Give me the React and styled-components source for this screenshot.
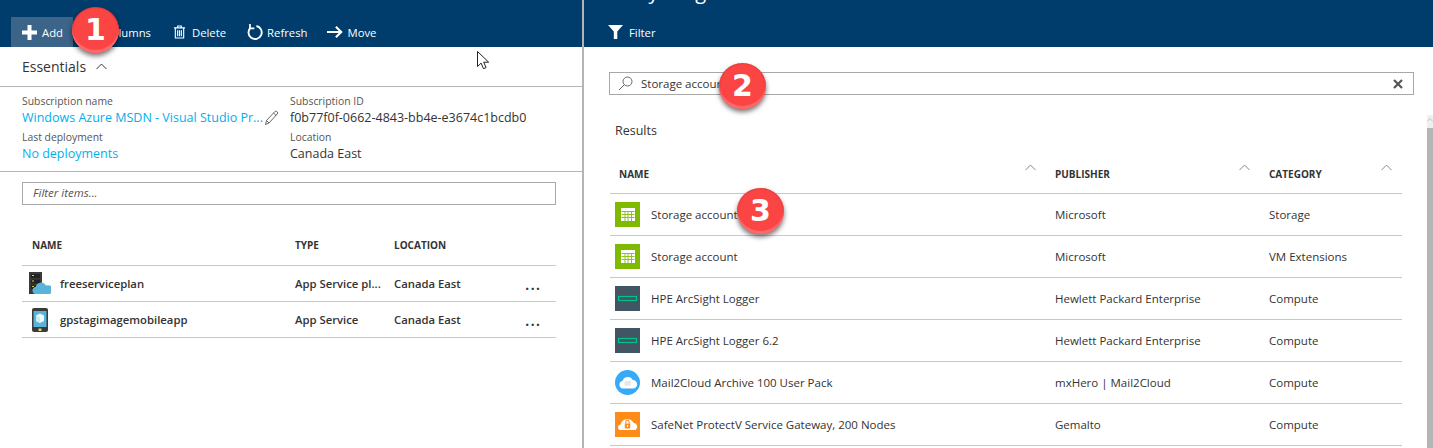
import React from "react"
import styled, { createGlobalStyle } from "styled-components"

const Global = createGlobalStyle`
  html, body { margin: 0; padding: 0; background: #fff; overflow: hidden; }
  body { font-family: "Open Sans", "Noto Sans", "Liberation Sans", sans-serif; color: #333; }
`

const AddIcon = () => (
  <svg width="17" height="17" viewBox="0 0 17 17"><path d="M6.5 1h4v5.5H16v4h-5.5V16h-4v-5.5H1v-4h5.5z" fill="#fff" /></svg>
)
const TrashIcon = () => (
  <svg width="13" height="16" viewBox="0 0 14 16" fill="none" stroke="#fff" strokeWidth="1.2">
    <path d="M1 3.5h12M5 3.5V1.5h4v2M2.5 3.5v11h9v-11" />
    <path d="M5 6v6.5M7 6v6.5M9 6v6.5" />
  </svg>
)
const RefreshIcon = () => (
  <svg width="17" height="18" viewBox="0 0 18 18" fill="none" stroke="#fff" strokeWidth="2">
    <path d="M5 4.2A7 7 0 1 0 11 2.6" />
    <path d="M4.2 0.6v4.6h4.6" strokeWidth="1.8" />
  </svg>
)
const ArrowIcon = () => (
  <svg width="16" height="14" viewBox="0 0 18 14" fill="none" stroke="#fff" strokeWidth="2.4">
    <path d="M0 7h15.5M10 1l6 6-6 6" />
  </svg>
)
const FilterIcon = () => (
  <svg width="15" height="14" viewBox="0 0 15 14"><path d="M0 0h15L9.3 6.5V14H5.8V6.5z" fill="#fff" /></svg>
)
const Chevron = ({ stroke = "#444", size = 11 }) => (
  <svg width={size} height={size * 0.6} viewBox="0 0 11 6.5" fill="none" stroke={stroke} strokeWidth="1"><path d="M.5 6 5.5 1l5 5" /></svg>
)
const PencilIcon = () => (
  <svg width="15" height="16" viewBox="0 0 15 16" fill="none" stroke="#666" strokeWidth="1">
    <path d="M1.5 14.5 2.5 10.5 10.8 1.6a1.4 1.4 0 0 1 2 0l.4.4a1.4 1.4 0 0 1 0 2L5 13z" />
    <path d="M2.5 10.5 5 13M9.5 3l2.7 2.6" />
  </svg>
)
const SearchIcon = () => (
  <svg width="15" height="15" viewBox="0 0 15 15" fill="none" stroke="#666" strokeWidth="1">
    <circle cx="9.5" cy="5.5" r="4.5" />
    <path d="M6.2 8.8 1 14" />
  </svg>
)
const CloseIcon = () => (
  <svg width="10" height="10" viewBox="0 0 10 10" stroke="#555" strokeWidth="2.2"><path d="M1 1l8 8M9 1l-8 8" /></svg>
)
const PlanIcon = () => (
  <svg width="22" height="24" viewBox="0 0 22 24">
    <rect x="0" y="0" width="13" height="22" fill="#3a3a3a" />
    <rect x="2" y="2" width="9" height="4" fill="#222" /><rect x="2" y="7.5" width="9" height="4" fill="#222" /><rect x="2" y="13" width="9" height="4" fill="#222" />
    <path d="M3 3.5h2M3 9h2M3 14.5h2" stroke="#c6dc3c" strokeWidth="1" />
    <path d="M6 22a3.6 3.6 0 0 1 .6-7A5.6 5.6 0 0 1 17 13.6a4.2 4.2 0 0 1 4 8.4z" fill="#59b4d9" />
  </svg>
)
const PhoneIcon = () => (
  <svg width="22" height="24" viewBox="0 0 22 24">
    <rect x="3" y="0" width="16" height="24" rx="2" fill="#3a3a3a" />
    <rect x="4.5" y="3" width="13" height="16" fill="#59b4d9" />
    <path d="M11 5.5l4 2V13l-4 2-4-2V7.5z" fill="#fff" opacity=".9" />
    <path d="M11 9.5V15l-4-2V7.5z" fill="#cfeaf6" />
    <rect x="9.5" y="20.5" width="3" height="2.5" fill="#d8d27c" />
  </svg>
)
const TableIcon = () => (
  <svg width="25" height="25" viewBox="0 0 25 25">
    <rect width="25" height="25" fill="#7fba00" />
    <rect x="6" y="6" width="14" height="13" fill="#fff" />
    <path d="M6.5 9.5h13M6.5 12.5h13M6.5 15.5h13M10 9v10M13 9v10M16.5 9v10" stroke="#8fc31f" strokeWidth="1" />
  </svg>
)
const HpeIcon = () => (
  <svg width="25" height="25" viewBox="0 0 25 25">
    <rect width="25" height="25" fill="#425563" />
    <rect x="3.5" y="10.5" width="18" height="4" fill="none" stroke="#01c28f" strokeWidth="1.2" />
  </svg>
)
const MailCloudIcon = () => (
  <svg width="25" height="25" viewBox="0 0 25 25">
    <circle cx="12.5" cy="12.5" r="12.5" fill="#36a9f7" />
    <path d="M8 18.5a3.8 3.8 0 0 1-.6-7.5A5.6 5.6 0 0 1 17.8 10 4.2 4.2 0 0 1 18 18.5z" fill="#fff" />
    <rect x="9.5" y="11" width="6.5" height="4.5" fill="#e8e8e8" />
  </svg>
)
const LockCloudIcon = () => (
  <svg width="25" height="25" viewBox="0 0 25 25">
    <rect width="25" height="25" fill="#ff8c1a" />
    <path d="M4.5 18a3 3 0 0 1 1-5.6A7.2 7.2 0 0 1 18.8 11 3.8 3.8 0 0 1 20.5 18z" fill="#fff" />
    <rect x="9.8" y="11.5" width="5.4" height="5" fill="#ff8c1a" />
    <path d="M10.8 11.5V10a1.7 1.7 0 0 1 3.4 0v1.5" fill="none" stroke="#ff8c1a" strokeWidth="1.1" />
    <rect x="12" y="13" width="1" height="2" fill="#fff" />
  </svg>
)
const CursorIcon = () => (
  <svg width="13" height="19" viewBox="0 0 13 19">
    <path d="M.5.5v15l3.6-3.4 2.4 5.6 2.6-1.1-2.4-5.4h5z" fill="#fff" stroke="#222" strokeWidth="1" />
  </svg>
)

const resources = [
  { name: "freeserviceplan", type: "App Service pl...", loc: "Canada East", icon: <PlanIcon /> },
  { name: "gpstagimagemobileapp", type: "App Service", loc: "Canada East", icon: <PhoneIcon /> },
]

const results = [
  { name: "Storage account", pub: "Microsoft", cat: "Storage", icon: <TableIcon /> },
  { name: "Storage account", pub: "Microsoft", cat: "VM Extensions", icon: <TableIcon /> },
  { name: "HPE ArcSight Logger", pub: "Hewlett Packard Enterprise", cat: "Compute", icon: <HpeIcon /> },
  { name: "HPE ArcSight Logger 6.2", pub: "Hewlett Packard Enterprise", cat: "Compute", icon: <HpeIcon /> },
  { name: "Mail2Cloud Archive 100 User Pack", pub: "mxHero | Mail2Cloud", cat: "Compute", icon: <MailCloudIcon /> },
  { name: "SafeNet ProtectV Service Gateway, 200 Nodes", pub: "Gemalto", cat: "Compute", icon: <LockCloudIcon /> },
]

const App = () => (
  <>
    <Global />
    <Page>
      <LeftPanel>
        <CommandBar>
          <CommandButton $active $gap="4px"><AddIcon />Add</CommandButton>
          <ColumnsButton>Columns</ColumnsButton>
          <CommandButton><TrashIcon />Delete</CommandButton>
          <CommandButton $gap="4px"><RefreshIcon />Refresh</CommandButton>
          <CommandButton $gap="4px"><ArrowIcon />Move</CommandButton>
        </CommandBar>
        <EssentialsHead>Essentials <Chevron stroke="#333" /></EssentialsHead>
        <Summary>
          <Field>
            <Label>Subscription name</Label>
            <LinkRow><Link>Windows Azure MSDN - Visual Studio Pr...</Link><PencilIcon /></LinkRow>
          </Field>
          <Field>
            <Label>Subscription ID</Label>
            <Value>f0b77f0f-0662-4843-bb4e-e3674c1bcdb0</Value>
          </Field>
          <Field>
            <Label>Last deployment</Label>
            <Link>No deployments</Link>
          </Field>
          <Field>
            <Label>Location</Label>
            <Value>Canada East</Value>
          </Field>
        </Summary>
        <FilterBox>Filter items...</FilterBox>
        <ResourceHead>
          <HeadCell $indent="10px">NAME</HeadCell>
          <HeadCell>TYPE</HeadCell>
          <HeadCell>LOCATION</HeadCell>
        </ResourceHead>
        {resources.map((r) => (
          <ResourceRow key={r.name}>
            <NameCell>{r.icon}<strong>{r.name}</strong></NameCell>
            <strong>{r.type}</strong>
            <strong>{r.loc}</strong>
            <Dots>...</Dots>
          </ResourceRow>
        ))}
      </LeftPanel>

      <RightPanel>
        <RightBar>
          <Title>Everything</Title>
          <CommandButton $pad="0"><FilterIcon />Filter</CommandButton>
        </RightBar>
        <SearchBox>
          <SearchIcon />
          <SearchText>Storage account</SearchText>
          <CloseIcon />
        </SearchBox>
        <ResultsTitle>Results</ResultsTitle>
        <ResultHead>
          <SortCell>NAME<Chevron stroke="#888" /></SortCell>
          <SortCell>PUBLISHER<Chevron stroke="#888" /></SortCell>
          <SortCell>CATEGORY<Chevron stroke="#888" /></SortCell>
        </ResultHead>
        {results.map((r, i) => (
          <ResultRow key={i}>
            <NameCell $gap="11px" $indent="5px">{r.icon}{r.name}</NameCell>
            <span>{r.pub}</span>
            <span>{r.cat}</span>
          </ResultRow>
        ))}
        <ScrollArrow><Chevron stroke="#999" size={6} /></ScrollArrow>
        <ScrollThumb />
      </RightPanel>

      <Cursor><CursorIcon /></Cursor>
      <Badge $x={72} $y={7}>1</Badge>
      <Badge $x={719} $y={63}>2</Badge>
      <Badge $x={737} $y={188}>3</Badge>
    </Page>
  </>
)

export default App

const Page = styled.div`
  position: relative;
  display: flex;
  width: 1433px;
  height: 448px;
  overflow: hidden;
  font-size: 12px;
`

const LeftPanel = styled.div`
  width: 582px;
  flex: none;
  border-right: 2px solid #b4b4b4;
`

const CommandBar = styled.div`
  display: flex;
  align-items: flex-end;
  height: 47px;
  padding-left: 11px;
  background: #003c6c;
`

const CommandButton = styled.div`
  display: flex;
  align-items: center;
  gap: ${(p) => p.$gap || "6px"};
  height: 30px;
  padding: 0 ${(p) => p.$pad || "10px"};
  color: #fff;
  font-size: 11.3px;
  background: ${(p) => (p.$active ? "#3b6488" : "transparent")};
`

const ColumnsButton = styled(CommandButton)`
  width: 90px;
  box-sizing: border-box;
  padding: 0 12px 0 0;
  justify-content: flex-end;
`

const EssentialsHead = styled.div`
  display: flex;
  align-items: center;
  gap: 10px;
  height: 39px;
  padding-left: 22px;
  font-size: 14px;
  border-bottom: 1px solid #b4b4b4;
`

const Summary = styled.div`
  display: grid;
  grid-template-columns: 268px 1fr;
  grid-auto-rows: 36px;
  height: 73px;
  padding: 7px 0 4px 22px;
  border-bottom: 1px solid #b4b4b4;
`

const Field = styled.div`
  display: flex;
  flex-direction: column;
`

const Label = styled.div`
  font-size: 10.4px;
  line-height: 15px;
  color: #555;
`

const LinkRow = styled.div`
  display: flex;
  align-items: center;
  gap: 1px;
`

const Link = styled.div`
  font-size: 12.5px;
  line-height: 18px;
  color: #00b0ee;
  white-space: nowrap;
`

const Value = styled.div`
  font-size: 12.5px;
  line-height: 18px;
  color: #333;
`

const FilterBox = styled.div`
  height: 21px;
  width: 522px;
  margin: 10px 0 0 22px;
  padding-left: 10px;
  border: 1px solid #a8a8a8;
  font-size: 11.5px;
  font-style: italic;
  line-height: 20px;
  color: #555;
`

const tableColumns = `
  display: grid;
  grid-template-columns: 273px 99px 131px 1fr;
  width: 534px;
  margin-left: 22px;
  border-bottom: 1px solid #c8c8c8;
`

const ResourceHead = styled.div`
  ${tableColumns}
  height: 61px;
  align-items: end;
  padding-bottom: 13px;
  box-sizing: border-box;
`

const HeadCell = styled.div`
  padding-left: ${(p) => p.$indent || 0};
  font-size: 10px;
  font-weight: 700;
  color: #333;
`

const ResourceRow = styled.div`
  ${tableColumns}
  height: 36px;
  box-sizing: border-box;
  align-items: center;
  font-size: 11.3px;
  strong { font-weight: 600; }
`

const NameCell = styled.div`
  display: flex;
  align-items: center;
  gap: ${(p) => p.$gap || "9px"};
  padding-left: ${(p) => p.$indent || "7px"};
`

const Dots = styled.div`
  font-size: 16px;
  font-weight: 600;
  line-height: 16px;
  letter-spacing: 1px;
`

const RightPanel = styled.div`
  position: relative;
  flex: 1;
  min-width: 0;
`

const RightBar = styled.div`
  display: flex;
  flex-direction: column;
  justify-content: flex-end;
  height: 47px;
  padding-left: 24px;
  background: #003c6c;
  overflow: hidden;
  position: relative;
`

const Title = styled.div`
  position: absolute;
  top: -20px;
  left: 24px;
  font-size: 20px;
  line-height: 24px;
  color: #fff;
`

const SearchBox = styled.div`
  display: flex;
  align-items: center;
  height: 21px;
  width: 785px;
  margin: 25px 0 0 25px;
  padding: 0 10px 0 8px;
  border: 1px solid #a8a8a8;
`

const SearchText = styled.div`
  flex: 1;
  margin-left: 8px;
  font-size: 11.5px;
  color: #333;
`

const ResultsTitle = styled.div`
  margin: 27px 0 0 31px;
  font-size: 12.5px;
  line-height: 18px;
`

const resultColumns = `
  display: grid;
  grid-template-columns: 445px 214px 133px;
  width: 792px;
  margin-left: 26px;
  border-bottom: 1px solid #c8c8c8;
`

const ResultHead = styled.div`
  ${resultColumns}
  height: 54px;
  box-sizing: border-box;
  padding-top: 28px;
`

const SortCell = styled.div`
  display: flex;
  justify-content: space-between;
  align-items: flex-start;
  padding: 0 19px 0 0;
  font-size: 10px;
  font-weight: 700;
  line-height: 13px;
  color: #333;
  &:first-child { padding-left: 9px; }
  &:last-child { padding-right: 10px; }
  svg { margin-top: -4px; }
`

const ResultRow = styled.div`
  ${resultColumns}
  height: 42px;
  box-sizing: border-box;
  align-items: center;
  font-size: 11.5px;
`

const ScrollArrow = styled.div`
  position: absolute;
  right: 0;
  top: 115px;
  width: 6px;
  height: 13px;
  background: #efefef;
  display: flex;
  justify-content: center;
  padding-top: 3px;
  box-sizing: border-box;
`

const ScrollThumb = styled.div`
  position: absolute;
  right: 0;
  top: 128px;
  bottom: 0;
  width: 6px;
  background: #b4b4b4;
`

const Cursor = styled.div`
  position: absolute;
  left: 477px;
  top: 51px;
  line-height: 0;
`

const Badge = styled.div`
  position: absolute;
  left: ${(p) => p.$x}px;
  top: ${(p) => p.$y}px;
  width: 47px;
  height: 46px;
  border-radius: 50%;
  display: flex;
  align-items: center;
  justify-content: center;
  background: radial-gradient(circle at 50% 40%, #fb4444 0 70%, #e53a3a 100%);
  box-shadow: 0 3px 5px rgba(0, 0, 0, 0.55), inset 0 -3px 1px #ff6a6a, inset 0 0 2px #b92a2a;
  color: #fff;
  font-family: "DejaVu Sans", sans-serif;
  font-size: 30px;
  font-weight: 700;
  line-height: 1;
`
